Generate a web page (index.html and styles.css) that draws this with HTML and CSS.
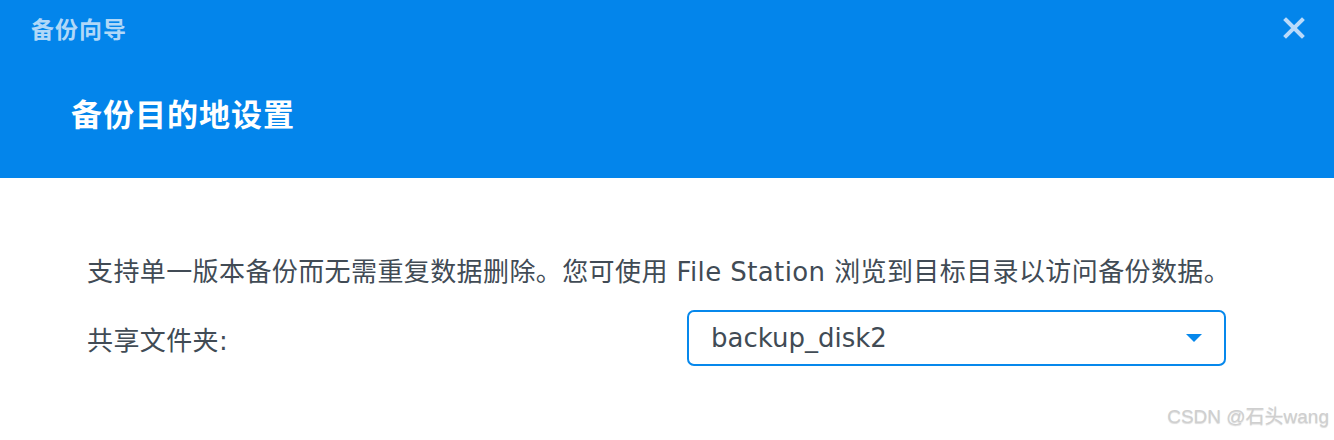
FILE: index.html
```html
<!DOCTYPE html>
<html lang="zh-CN">
<head>
<meta charset="utf-8">
<title>备份向导</title>
<link rel="stylesheet" href="styles.css">
</head>
<body>
<div class="dialog">
  <header class="header">
    <div class="titlebar">
      <span class="wintitle">备份向导</span>
      <button class="close" aria-label="关闭">
        <svg width="22" height="22" viewBox="0 0 22 22"><path d="M3 3 L19 19 M19 3 L3 19" stroke="#b9dafa" stroke-width="4" stroke-linecap="square" fill="none"/></svg>
      </button>
    </div>
    <h1 class="heading">备份目的地设置</h1>
  </header>
  <main class="content">
    <p class="desc">支持单一版本备份而无需重复数据删除。您可使用 File Station 浏览到目标目录以访问备份数据。</p>
    <div class="row">
      <label class="label">共享文件夹:</label>
      <div class="select">
        <span class="value">backup_disk2</span>
        <span class="caret"></span>
      </div>
    </div>
  </main>
  <div class="watermark">CSDN @石头wang</div>
</div>
</body>
</html>
```
FILE: styles.css
```css
* { box-sizing: border-box; }
html, body { margin: 0; padding: 0; }
body {
  width: 1334px;
  height: 440px;
  background: #ffffff;
  font-family: "DejaVu Sans", "Noto Sans CJK SC", sans-serif;
  overflow: hidden;
}
.dialog {
  position: relative;
  width: 1334px;
  height: 440px;
}
.header {
  background: #0385eb;
  height: 178px;
  display: flex;
  flex-direction: column;
}
.titlebar {
  display: flex;
  align-items: center;
  justify-content: space-between;
  height: 56px;
  padding: 0 29px 0 31px;
}
.wintitle {
  font-family: "Noto Sans CJK SC", sans-serif;
  font-weight: 700;
  font-size: 23px;
  color: rgba(255, 255, 255, 0.7);
  letter-spacing: 1px;
}
.close {
  background: none;
  border: 0;
  padding: 0;
  width: 22px;
  height: 22px;
  display: flex;
}
.heading {
  margin: 0;
  padding: 37px 0 0 71px;
  font-family: "Noto Sans CJK SC", sans-serif;
  font-weight: 700;
  font-size: 31px;
  line-height: 40px;
  color: #ffffff;
  letter-spacing: 1px;
}
.content {
  padding: 76px 0 0 87px;
  color: #414b55;
}
.desc {
  margin: 0;
  font-size: 26px;
  line-height: 36px;
  letter-spacing: 0.4px;
}
.row {
  display: flex;
  align-items: center;
  margin-top: 20px;
}
.label {
  width: 600px;
  font-size: 26px;
  letter-spacing: 0.4px;
}
.select {
  width: 539px;
  height: 56px;
  border: 2px solid #0688ec;
  border-radius: 7px;
  display: flex;
  align-items: center;
  justify-content: space-between;
  padding: 0 22px 0 22px;
}
.value {
  font-size: 26px;
  color: #414b55;
}
.caret {
  width: 0;
  height: 0;
  border-left: 8px solid transparent;
  border-right: 8px solid transparent;
  border-top: 8px solid #0688ec;
}
.watermark {
  position: absolute;
  right: 5px;
  bottom: 12px;
  font-family: "Liberation Sans", "Noto Sans CJK SC", sans-serif;
  font-size: 19px;
  color: #cfcfcf;
  text-shadow: 0 1px 1px rgba(0,0,0,0.15);
}
```
